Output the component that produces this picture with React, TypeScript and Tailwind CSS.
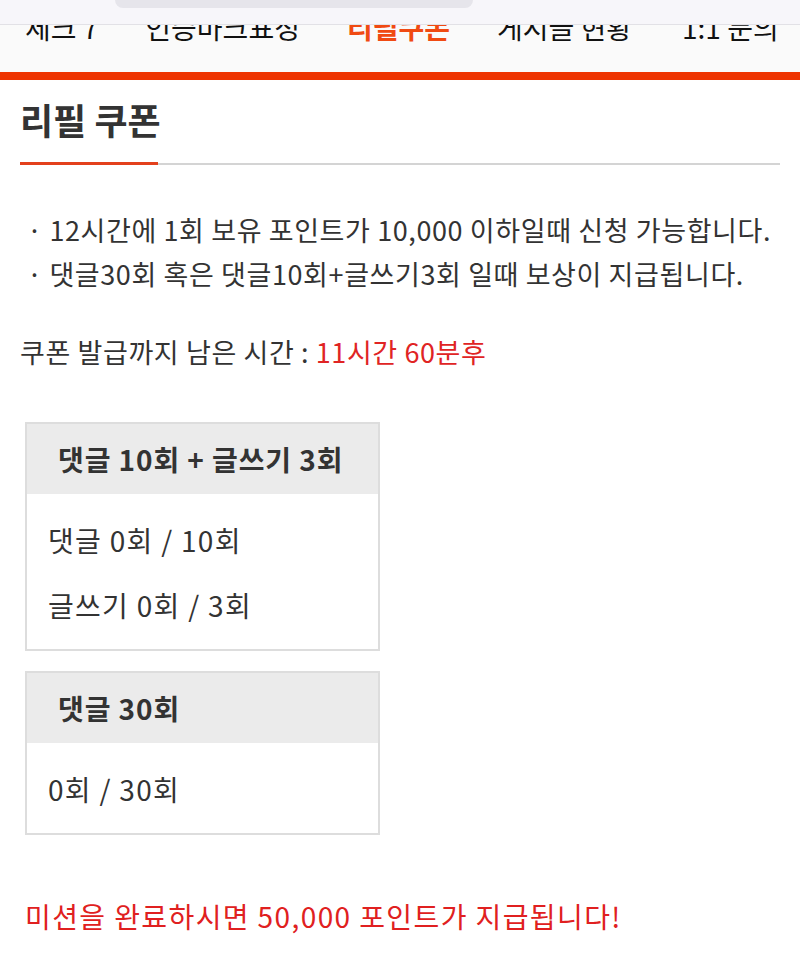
const font = { fontFamily: '"Noto Sans CJK KR", "Noto Sans", sans-serif' };

const navItems = [
  { label: '체크 7', active: false },
  { label: '인증마크표정', active: false },
  { label: '리필쿠폰', active: true },
  { label: '게시글 현황', active: false },
  { label: '1:1 문의', active: false },
];

function MissionBox({ title, rows }: { title: string; rows: string[] }) {
  return (
    <div className="w-[355px] border-2 border-[#dddddd] bg-white">
      <div className="flex h-[70px] items-center bg-[#ebebeb] pl-[31px] text-[28px] font-bold tracking-[0.9px] text-[#333333]">
        {title}
      </div>
      <div className="flex flex-col gap-[21px] px-[21px] pt-[24px] pb-[22px]">
        {rows.map((r) => (
          <p key={r} className="text-[28px] leading-[44px] tracking-[1.3px] text-[#333333]">
            {r}
          </p>
        ))}
      </div>
    </div>
  );
}

export default function App() {
  return (
    <div className="relative min-h-[976px] w-[800px] overflow-hidden bg-white" style={font}>
      {/* browser bar laid over the nav */}
      <div className="absolute inset-x-0 top-0 z-10 h-[25px] border-b border-[#e2e1e6] bg-[#f7f6fa]">
        <div className="absolute left-[115px] top-0 h-[8px] w-[358px] rounded-b-full bg-[#e6e5eb]" />
      </div>

      {/* nav tabs */}
      <div className="h-[72px] bg-[#fafafa]">
        <div className="flex gap-[47px] pl-[25px] pt-[11px]">
          {navItems.map((n, i) => (
            <span
              key={n.label}
              className={
                n.active
                  ? 'text-[28px] leading-[32px] font-bold text-[#f04a12]'
                  : i === 4
                    ? 'ml-[3px] text-[28px] leading-[32px] text-[#111111]'
                    : 'text-[28px] leading-[32px] text-[#111111]'
              }
            >
              {n.label}
            </span>
          ))}
        </div>
      </div>
      <div className="h-[8px] bg-[#ee3300]" />

      <div className="px-[20px]">
        <h1 className="pt-[15px] text-[36px] font-bold leading-[48px] text-[#333333]">리필 쿠폰</h1>
        <div className="mt-[19px] flex items-end">
          <div className="h-[3px] w-[138px] bg-[#e3401c]" />
          <div className="h-[2px] flex-1 bg-[#d4d4d4]" />
        </div>

        <div className="mt-[43px] pl-[7px] text-[27px] leading-[44px] tracking-[0.6px] text-[#333333]">
          <p>· 12시간에 1회 보유 포인트가 10,000 이하일때 신청 가능합니다.</p>
          <p>· 댓글30회 혹은 댓글10회+글쓰기3회 일때 보상이 지급됩니다.</p>
        </div>

        <p className="mt-[34px] text-[27px] leading-[44px] tracking-[0.6px] text-[#333333]">
          쿠폰 발급까지 남은 시간 : <span className="text-[#e02424]">11시간 60분후</span>
        </p>

        <div className="mt-[48px] flex flex-col gap-[20px] pl-[5px]">
          <MissionBox title="댓글 10회 + 글쓰기 3회" rows={['댓글 0회 / 10회', '글쓰기 0회 / 3회']} />
          <MissionBox title="댓글 30회" rows={['0회 / 30회']} />
        </div>

        <p className="mt-[59px] pl-[5px] text-[28px] leading-[44px] tracking-[1.4px] text-[#e02020]">
          미션을 완료하시면 50,000 포인트가 지급됩니다!
        </p>
      </div>
    </div>
  );
}
